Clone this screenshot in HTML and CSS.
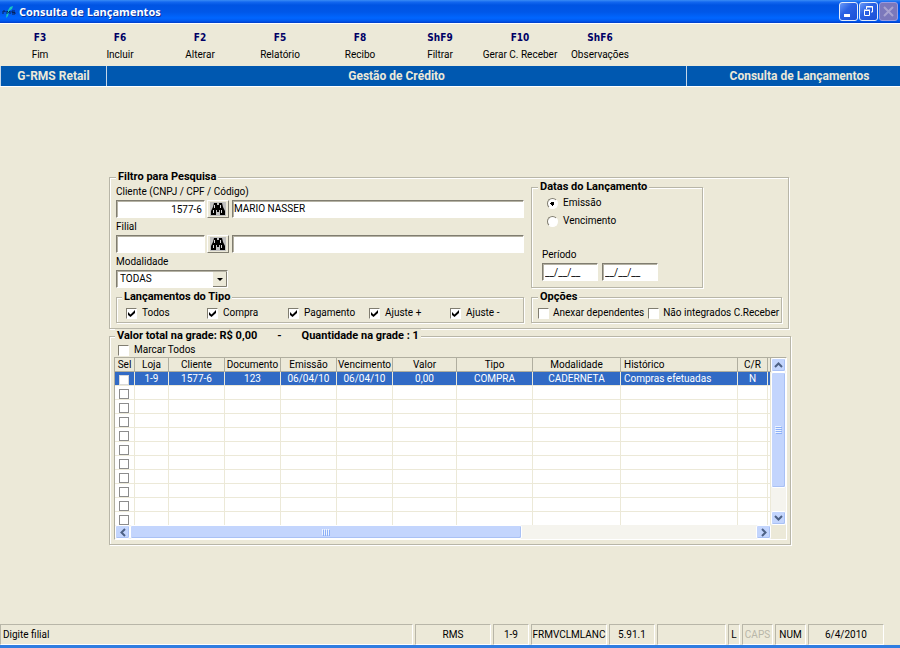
FILE: index.html
```html
<!DOCTYPE html>
<html lang="pt-BR">
<head>
    <meta charset="UTF-8">
    <meta name="viewport" content="width=device-width, initial-scale=1.0">
    <title>Consulta de Lançamentos</title>
    <link rel="stylesheet" href="styles.css">
</head>
<body>

    <!-- Title bar -->
    <header class="titlebar">
        <svg class="app-icon" width="16" height="14" viewBox="0 0 16 14">
            <path d="M4 13 L5 7 L8 2 L11 1 L10 4 L7 6 L6 11 Z" fill="#19c8c0"/>
            <path d="M1 9V6h2v1M5 9V6l1.500 1.500L8 6v3M13 6h-3v1.500h3V9h-3" fill="none" stroke="#06235c"/>
        </svg>
        <h1>Consulta de Lançamentos</h1>
        <div class="window-buttons">
            <button type="button" aria-label="Minimizar"><svg width="17" height="17" viewBox="0 0 17 17"><path d="M4 11h6v3H4z" fill="#fff"/></svg></button>
            <button type="button" aria-label="Restaurar"><svg width="17" height="17" viewBox="0 0 17 17"><path d="M6.500 6V3.500h6V9H11M6 4h7" fill="none" stroke="#fff"/><path d="M4.500 7.500h5v5h-5zM4 7h6" fill="none" stroke="#fff"/></svg></button>
            <button type="button" class="disabled" disabled aria-label="Fechar"><svg width="17" height="17" viewBox="0 0 17 17"><path d="M4 4l9 9M13 4l-9 9" fill="none" stroke="#a9a3d0" stroke-width="2"/></svg></button>
        </div>
    </header>

    <!-- Function keys -->
    <nav class="toolbar">
        <button type="button"><b>F3</b><span>Fim</span></button>
        <button type="button"><b>F6</b><span>Incluir</span></button>
        <button type="button"><b>F2</b><span>Alterar</span></button>
        <button type="button"><b>F5</b><span>Relatório</span></button>
        <button type="button"><b>F8</b><span>Recibo</span></button>
        <button type="button"><b>ShF9</b><span>Filtrar</span></button>
        <button type="button"><b>F10</b><span>Gerar C. Receber</span></button>
        <button type="button"><b>ShF6</b><span>Observações</span></button>
    </nav>

    <div class="band">
        <div>G-RMS Retail</div>
        <div>Gestão de Crédito</div>
        <div>Consulta de Lançamentos</div>
    </div>

    <main class="content">
        <fieldset class="group filter">
            <legend>Filtro para Pesquisa</legend>
            <div class="filter-grid">
                <div class="fields">
                    <label for="cliente">Cliente (CNPJ / CPF / Código)</label>
                    <div class="field-row">
                        <input type="text" class="code" id="cliente" value="1577-6">
                        <button type="button" class="search" aria-label="Buscar cliente"><svg width="16" height="14" viewBox="0 0 16 14"><path d="M0 0h16v14H0z" fill="#c0c0c0"/><path d="M4 1h3v2h2V1h3l1 4 2 4v4h-5V8H9v2H7V8H6v5H1V9l2-4z" fill="#000"/><path d="M4.500 3v3M3.500 8v3M10.500 3v3M11.500 8v3" stroke="#d8d8d8"/></svg></button>
                        <input type="text" class="name" aria-label="Nome do cliente" value="MARIO NASSER">
                    </div>
                    <label for="filial">Filial</label>
                    <div class="field-row">
                        <input type="text" class="code" id="filial">
                        <button type="button" class="search" aria-label="Buscar filial"><svg width="16" height="14" viewBox="0 0 16 14"><path d="M0 0h16v14H0z" fill="#c0c0c0"/><path d="M4 1h3v2h2V1h3l1 4 2 4v4h-5V8H9v2H7V8H6v5H1V9l2-4z" fill="#000"/><path d="M4.500 3v3M3.500 8v3M10.500 3v3M11.500 8v3" stroke="#d8d8d8"/></svg></button>
                        <input type="text" class="name" aria-label="Nome da filial">
                    </div>
                    <label for="modalidade">Modalidade</label>
                    <select id="modalidade">
                        <option>TODAS</option>
                    </select>
                </div>

                <fieldset class="group dates">
                    <legend>Datas do Lançamento</legend>
                    <label class="radio"><input type="radio" name="data" checked>Emissão</label>
                    <label class="radio"><input type="radio" name="data">Vencimento</label>
                    <label class="period" for="inicio">Período</label>
                    <div class="period-row">
                        <input type="text" id="inicio" value="__/__/__">
                        <input type="text" aria-label="Período final" value="__/__/__">
                    </div>
                </fieldset>

                <fieldset class="group types">
                    <legend>Lançamentos do Tipo</legend>
                    <div class="checks">
                        <label class="check"><input type="checkbox" checked>Todos</label>
                        <label class="check"><input type="checkbox" checked>Compra</label>
                        <label class="check"><input type="checkbox" checked>Pagamento</label>
                        <label class="check"><input type="checkbox" checked>Ajuste +</label>
                        <label class="check"><input type="checkbox" checked>Ajuste -</label>
                    </div>
                </fieldset>

                <fieldset class="group options">
                    <legend>Opções</legend>
                    <div class="checks">
                        <label class="check"><input type="checkbox">Anexar dependentes</label>
                        <label class="check"><input type="checkbox">Não integrados C.Receber</label>
                    </div>
                </fieldset>
            </div>
        </fieldset>

        <fieldset class="group results">
            <legend><span>Valor total na grade: R$ 0,00</span><span>-</span><span>Quantidade na grade : 1</span></legend>
            <label class="check mark-all"><input type="checkbox">Marcar Todos</label>
            <div class="grid-box">
                <div class="grid-view">
                    <table>
                        <colgroup>
                            <col class="w-sel"><col class="w-loja"><col class="w-code"><col class="w-code"><col class="w-code"><col class="w-code">
                            <col class="w-valor"><col class="w-tipo"><col class="w-modal"><col><col class="w-cr"><col class="w-end">
                        </colgroup>
                        <thead>
                            <tr><th>Sel</th><th>Loja</th><th>Cliente</th><th>Documento</th><th>Emissão</th><th>Vencimento</th><th>Valor</th><th>Tipo</th><th>Modalidade</th><th class="left">Histórico</th><th>C/R</th><th></th></tr>
                        </thead>
                        <tbody>
                            <tr class="selected"><td><input type="checkbox" aria-label="Selecionar"></td><td>1-9</td><td>1577-6</td><td>123</td><td>06/04/10</td><td>06/04/10</td><td>0,00</td><td>COMPRA</td><td>CADERNETA</td><td class="left">Compras efetuadas</td><td>N</td><td></td></tr>
                            <tr><td><input type="checkbox" aria-label="Selecionar"></td><td></td><td></td><td></td><td></td><td></td><td></td><td></td><td></td><td></td><td></td><td></td></tr>
                            <tr><td><input type="checkbox" aria-label="Selecionar"></td><td></td><td></td><td></td><td></td><td></td><td></td><td></td><td></td><td></td><td></td><td></td></tr>
                            <tr><td><input type="checkbox" aria-label="Selecionar"></td><td></td><td></td><td></td><td></td><td></td><td></td><td></td><td></td><td></td><td></td><td></td></tr>
                            <tr><td><input type="checkbox" aria-label="Selecionar"></td><td></td><td></td><td></td><td></td><td></td><td></td><td></td><td></td><td></td><td></td><td></td></tr>
                            <tr><td><input type="checkbox" aria-label="Selecionar"></td><td></td><td></td><td></td><td></td><td></td><td></td><td></td><td></td><td></td><td></td><td></td></tr>
                            <tr><td><input type="checkbox" aria-label="Selecionar"></td><td></td><td></td><td></td><td></td><td></td><td></td><td></td><td></td><td></td><td></td><td></td></tr>
                            <tr><td><input type="checkbox" aria-label="Selecionar"></td><td></td><td></td><td></td><td></td><td></td><td></td><td></td><td></td><td></td><td></td><td></td></tr>
                            <tr><td><input type="checkbox" aria-label="Selecionar"></td><td></td><td></td><td></td><td></td><td></td><td></td><td></td><td></td><td></td><td></td><td></td></tr>
                            <tr><td><input type="checkbox" aria-label="Selecionar"></td><td></td><td></td><td></td><td></td><td></td><td></td><td></td><td></td><td></td><td></td><td></td></tr>
                            <tr><td><input type="checkbox" aria-label="Selecionar"></td><td></td><td></td><td></td><td></td><td></td><td></td><td></td><td></td><td></td><td></td><td></td></tr>
                        </tbody>
                    </table>
                </div>
                <div class="scroll vertical">
                    <button type="button" aria-label="Acima"><svg width="9" height="6" viewBox="0 0 9 6"><path d="M1 5l3.500-3.500L8 5" fill="none" stroke="#4d6185" stroke-width="2"/></svg></button>
                    <div class="thumb"><svg width="7" height="8" viewBox="0 0 7 8"><path d="M0 .5h6M0 2.500h6M0 4.500h6M0 6.500h6" stroke="#eef4fe"/><path d="M1 1.500h6M1 3.500h6M1 5.500h6M1 7.500h6" stroke="#8cb0f8"/></svg></div>
                    <div class="track"></div>
                    <button type="button" aria-label="Abaixo"><svg width="9" height="6" viewBox="0 0 9 6"><path d="M1 1l3.500 3.500L8 1" fill="none" stroke="#4d6185" stroke-width="2"/></svg></button>
                </div>
                <div class="scroll horizontal">
                    <button type="button" aria-label="Esquerda"><svg width="6" height="9" viewBox="0 0 6 9"><path d="M5 1L1.500 4.500 5 8" fill="none" stroke="#4d6185" stroke-width="2"/></svg></button>
                    <div class="thumb"><svg width="8" height="7" viewBox="0 0 8 7"><path d="M.5 0v6M2.500 0v6M4.500 0v6M6.500 0v6" stroke="#eef4fe"/><path d="M1.500 1v6M3.500 1v6M5.500 1v6M7.500 1v6" stroke="#8cb0f8"/></svg></div>
                    <div class="track"></div>
                    <button type="button" aria-label="Direita"><svg width="6" height="9" viewBox="0 0 6 9"><path d="M1 1l3.500 3.500L1 8" fill="none" stroke="#4d6185" stroke-width="2"/></svg></button>
                </div>
            </div>
        </fieldset>
    </main>

    <!-- Status bar -->
    <footer class="statusbar">
        <div class="message">Digite filial</div>
        <div class="wide">RMS</div>
        <div class="store">1-9</div>
        <div class="wide">FRMVCLMLANC</div>
        <div class="version">5.91.1</div>
        <div class="empty"></div>
        <div class="flag">L</div>
        <div class="lock off">CAPS</div>
        <div class="lock">NUM</div>
        <div class="wide">6/4/2010</div>
    </footer>

</body>
</html>
```

FILE: styles.css
```css
* {
    box-sizing: border-box;
}
body {
    font-family: Roboto, "Liberation Sans", Arial, sans-serif;
    font-size: 10px;
    line-height: 14px;
    margin: 0;
    min-height: 100vh;
    display: flex;
    flex-direction: column;
    color: #000;
    background-color: #ece9d8;
}
button, input, select {
    font: inherit;
    color: inherit;
    margin: 0;
    padding: 0;
}
svg {
    display: block;
}

/* Title bar */
.titlebar {
    display: flex;
    align-items: center;
    height: 23px;
    padding: 0 2px;
    background: linear-gradient(#3a8cf5 0, #1468f0 2px, #0054e3 5px, #0057e8 12px, #0066ff 18px, #0058ee 21px, #003dc8 23px);
}
.app-icon {
    margin-right: 1px;
}
.titlebar h1 {
    flex: 1;
    margin: 0;
    font-family: "Open Sans", sans-serif;
    font-size: 11px;
    font-weight: bold;
    color: #fff;
    text-shadow: 1px 1px 0 #0a2f9a;
}
.window-buttons {
    display: flex;
    gap: 1px;
}
.window-buttons button {
    width: 19px;
    height: 19px;
    border: 1px solid #e4ecfb;
    border-radius: 3px;
    background: linear-gradient(135deg, #6b9af8, #2a62e4 40%, #1c4fd6);
}
.window-buttons .disabled {
    border-color: #9a9be0;
    background: #7c78bb;
}

/* Function keys */
.toolbar {
    display: flex;
    height: 43px;
    padding-top: 5px;
    border-top: 1px solid #fff;
}
.toolbar button {
    display: flex;
    flex-direction: column;
    align-items: center;
    width: 80px;
    border: none;
    background: none;
    line-height: 17px;
    white-space: nowrap;
}
.toolbar b {
    font-family: "DejaVu Sans Condensed", "DejaVu Sans", sans-serif;
    color: #000066;
}

.band {
    display: grid;
    grid-template-columns: 106px 1fr 214px;
    font-size: 12px;
    font-weight: bold;
    line-height: 20px;
    text-align: center;
    color: #ece9d8;
    background-color: #0058b0;
    border-bottom: 1px solid #fff;
}
.band div + div {
    border-left: 1px solid #c4d6e8;
}
.band div:first-child {
    border-left: 1px solid #c4d6e8;
}
.band div:last-child {
    padding-left: 12px;
}

/* Group boxes */
.content {
    flex: 1;
    width: 682px;
    max-width: 100%;
    margin: 0 auto;
    padding-top: 83px;
}
.group {
    min-width: 0;
    margin: 0;
    padding: 0 6px;
    border: 1px solid #b8b6a8;
    box-shadow: 1px 1px 0 #fff, inset 1px 1px 0 #fff;
}
.group legend {
    padding: 0 2px;
    font-size: 11px;
    font-weight: bold;
    line-height: 14px;
    background-color: #ece9d8;
}
.filter {
    margin-right: 2px;
}
.filter-grid {
    display: grid;
    grid-template-columns: 1fr 251px;
    column-gap: 7px;
    row-gap: 2px;
    padding-bottom: 5px;
}
.fields label {
    display: block;
    line-height: 16px;
}
.field-row {
    display: flex;
    align-items: center;
    margin-bottom: 1px;
}
input[type="text"], select {
    height: 18px;
    border: 1px solid #fff;
    border-top-color: #807d70;
    border-left-color: #807d70;
    border-radius: 0;
    box-shadow: inset 1px 1px 0 #b5b2a4;
    background-color: #fff;
}
.code {
    width: 89px;
    margin-right: 2px;
    padding-right: 2px;
    text-align: right;
}
.name {
    flex: 1;
    min-width: 0;
    padding-left: 1px;
    padding-bottom: 2px;
}
.search {
    display: grid;
    place-items: center;
    width: 22px;
    height: 18px;
    margin-right: 3px;
    border: 1px solid #fff;
    border-right-color: #807d70;
    border-bottom-color: #807d70;
    background-color: #ece9d8;
}
select {
    appearance: none;
    display: block;
    width: 112px;
    padding-left: 3px;
    background-image: url("data:image/svg+xml,%3Csvg xmlns='http://www.w3.org/2000/svg' width='14' height='15'%3E%3Cpath d='M0 0h14v15H0z' fill='%23ece9d8'/%3E%3Cpath d='M0 14.500h13.500V0' fill='none' stroke='%23807d70'/%3E%3Cpath d='M4 6h6l-3 3z'/%3E%3C/svg%3E");
    background-repeat: no-repeat;
    background-position: right center;
}

/* Tick boxes and radios */
input[type="checkbox"] {
    appearance: none;
    width: 11px;
    height: 11px;
    border: 1px solid #fff;
    border-top-color: #807d70;
    border-left-color: #807d70;
    background: #fff no-repeat center;
}
input[type="checkbox"]:checked {
    background-image: url("data:image/svg+xml,%3Csvg xmlns='http://www.w3.org/2000/svg' width='7' height='7'%3E%3Cpath d='M0 2l2.500 2.500L7 0v3L2.500 7 0 5z'/%3E%3C/svg%3E");
}
input[type="radio"] {
    appearance: none;
    width: 11px;
    height: 11px;
    border: 1px solid #fff;
    border-top-color: #807d70;
    border-left-color: #807d70;
    border-radius: 50%;
    background-color: #fff;
}
input[type="radio"]:checked {
    background-image: radial-gradient(circle, #000 2px, #fff 2px);
}
.check, .radio {
    display: flex;
    flex: none;
    align-items: center;
    gap: 5px;
    white-space: nowrap;
}
.dates {
    align-self: end;
    width: 172px;
    margin-top: -4px;
    padding: 0 10px 6px;
}
.radio {
    height: 18px;
    padding-left: 5px;
}
.period {
    display: block;
    margin-top: 17px;
    line-height: 16px;
}
.period-row {
    display: flex;
    gap: 4px;
}
.period-row input {
    width: 56px;
    padding-left: 2px;
}
.checks {
    display: flex;
    height: 18px;
}
.types {
    padding: 0 0 0 9px;
}
.types .check {
    width: 81px;
}
.options .checks {
    gap: 4px;
}
.options .check {
    gap: 4px;
}
.types legend, .dates legend {
    margin-left: -4px;
}

/* Results grid */
.results {
    padding: 0 3px 4px 4px;
}
.results legend {
    display: flex;
    gap: 20px;
    margin-left: 1px;
}
.mark-all {
    height: 14px;
    padding-left: 4px;
}
.grid-box {
    display: grid;
    grid-template-columns: 1fr 15px;
    border: 1px solid #fff;
    border-top-color: #b0ae9f;
    border-left-color: #b0ae9f;
}
.grid-view {
    overflow: hidden;
    height: 167px;
    background-color: #fff;
}
table {
    width: 100%;
    table-layout: fixed;
    border-collapse: separate;
    border-spacing: 0;
}
.w-sel { width: 20px; }
.w-loja { width: 34px; }
.w-code { width: 56px; }
.w-valor { width: 64px; }
.w-tipo { width: 76px; }
.w-modal { width: 88px; }
.w-cr { width: 30px; }
.w-end { width: 3px; }
th, td {
    height: 14px;
    padding: 0;
    line-height: 13px;
    font-weight: normal;
    text-align: center;
    white-space: nowrap;
    border-right: 1px solid #ece9d8;
    border-bottom: 1px solid #ece9d8;
}
th {
    background-color: #ece9d8;
    border-right-color: #b0ae9f;
    border-bottom-color: #b0ae9f;
}
th.left, td.left {
    padding-left: 3px;
    text-align: left;
}
.selected td {
    color: #fff;
    background-color: #316ac5;
}
td input[type="checkbox"] {
    display: block;
    width: 10px;
    height: 10px;
    margin: 2px 0 0 4px;
    border: 1px solid #8c8c8c;
}
.selected input[type="checkbox"] {
    border-color: #d8d8d8;
}

.scroll {
    display: flex;
    background-color: #f5f4ee;
}
.vertical {
    flex-direction: column;
}
.scroll button, .thumb {
    display: grid;
    place-items: center;
    flex: none;
    border: 1px solid #fff;
    border-radius: 2px;
    background-color: #c3d5fd;
    box-shadow: inset -1px -1px 0 #a9c1f5;
}
.scroll button {
    width: 15px;
    height: 14px;
}
.vertical .thumb {
    flex: 115;
}
.vertical .track {
    flex: 23;
}
.horizontal .thumb {
    flex: 392;
}
.horizontal .track {
    flex: 235;
}

/* Status bar */
.statusbar {
    display: flex;
    gap: 2px;
    padding-right: 16px;
    border-bottom: 3px solid #2f7de1;
    line-height: 19px;
    text-align: center;
}
.statusbar div {
    flex: none;
    height: 21px;
    border: 1px solid #fff;
    border-top-color: #b8b6a8;
    border-left-color: #b8b6a8;
}
.statusbar .message {
    flex: 1;
    padding-left: 2px;
    text-align: left;
}
.statusbar .wide { width: 76px; }
.statusbar .store { width: 36px; }
.statusbar .version { width: 46px; }
.statusbar .empty { width: 69px; }
.statusbar .flag { width: 12px; }
.statusbar .lock { width: 31px; }
.statusbar .off {
    color: #b8b6a8;
}
```
